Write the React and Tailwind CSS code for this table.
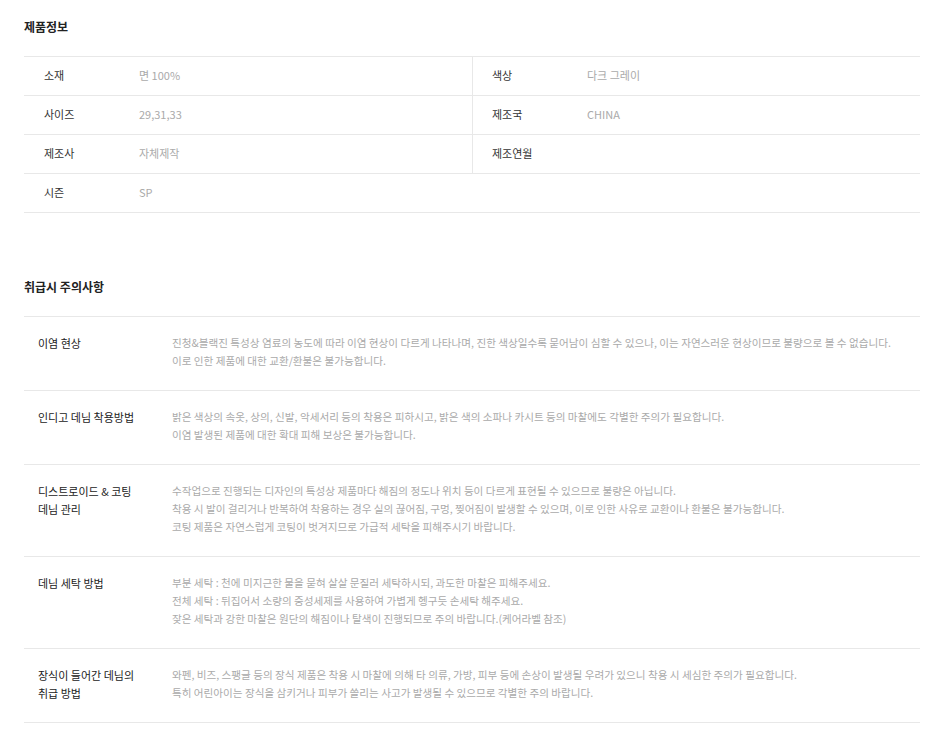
const specs = [
  { label: "소재", value: "면 100%" },
  { label: "색상", value: "다크 그레이" },
  { label: "사이즈", value: "29,31,33" },
  { label: "제조국", value: "CHINA" },
  { label: "제조사", value: "자체제작" },
  { label: "제조연월", value: "" },
];

const cautions = [
  {
    title: ["이염 현상"],
    lines: [
      "진청&블랙진 특성상 염료의 농도에 따라 이염 현상이 다르게 나타나며, 진한 색상일수록 묻어남이 심할 수 있으나, 이는 자연스러운 현상이므로 불량으로 볼 수 없습니다.",
      "이로 인한 제품에 대한 교환/환불은 불가능합니다.",
    ],
  },
  {
    title: ["인디고 데님 착용방법"],
    lines: [
      "밝은 색상의 속옷, 상의, 신발, 악세서리 등의 착용은 피하시고, 밝은 색의 소파나 카시트 등의 마찰에도 각별한 주의가 필요합니다.",
      "이염 발생된 제품에 대한 확대 피해 보상은 불가능합니다.",
    ],
  },
  {
    title: ["디스트로이드 & 코팅", "데님 관리"],
    lines: [
      "수작업으로 진행되는 디자인의 특성상 제품마다 해짐의 정도나 위치 등이 다르게 표현될 수 있으므로 불량은 아닙니다.",
      "착용 시 발이 걸리거나 반복하여 착용하는 경우 실의 끊어짐, 구멍, 찢어짐이 발생할 수 있으며, 이로 인한 사유로 교환이나 환불은 불가능합니다.",
      "코팅 제품은 자연스럽게 코팅이 벗겨지므로 가급적 세탁을 피해주시기 바랍니다.",
    ],
  },
  {
    title: ["데님 세탁 방법"],
    lines: [
      "부분 세탁 : 천에 미지근한 물을 묻혀 살살 문질러 세탁하시되, 과도한 마찰은 피해주세요.",
      "전체 세탁 : 뒤집어서 소량의 중성세제를 사용하여 가볍게 헹구듯 손세탁 해주세요.",
      "잦은 세탁과 강한 마찰은 원단의 해짐이나 탈색이 진행되므로 주의 바랍니다.(케어라벨 참조)",
    ],
  },
  {
    title: ["장식이 들어간 데님의", "취급 방법"],
    lines: [
      "와펜, 비즈, 스팽글 등의 장식 제품은 착용 시 마찰에 의해 타 의류, 가방, 피부 등에 손상이 발생될 우려가 있으니 착용 시 세심한 주의가 필요합니다.",
      "특히 어린아이는 장식을 삼키거나 피부가 쓸리는 사고가 발생될 수 있으므로 각별한 주의 바랍니다.",
    ],
  },
];

function SpecCell({ label, value, right }) {
  return (
    <div className={`flex h-[39px] items-center border-b border-[#e8e8e8] pb-[2px] ${right ? "border-l pl-[19px]" : "pl-5"}`}>
      <span className="w-[95px] shrink-0 text-[11px] text-[#333]">{label}</span>
      <span className="text-[11px] text-[#aaa]">{value}</span>
    </div>
  );
}

export default function App() {
  return (
    <div className="min-h-[744px] bg-white pl-6 pr-[15px] pt-[18px] font-['Noto_Sans_CJK_KR','Malgun_Gothic',sans-serif]">
      <h2 className="text-[12px] font-bold leading-[18px] text-[#222]">제품정보</h2>

      <div className="mt-[20px] grid grid-cols-2 border-t border-[#e8e8e8]">
        {specs.map((spec, index) => (
          <SpecCell key={spec.label} label={spec.label} value={spec.value} right={index % 2 === 1} />
        ))}
        <div className="col-span-2">
          <SpecCell label="시즌" value="SP" />
        </div>
      </div>

      <h2 className="mt-[65px] text-[12px] font-bold leading-[18px] text-[#222]">취급시 주의사항</h2>

      <div className="mt-[20px] border-t border-[#e8e8e8]">
        {cautions.map((item) => (
          <div key={item.title[0]} className="flex border-b border-[#e8e8e8] pb-[20px] pt-[17px]">
            <div className="w-[148px] shrink-0 pl-[14px] text-[11px] leading-[18px] text-[#222]">
              {item.title.map((line) => (
                <p key={line}>{line}</p>
              ))}
            </div>
            <div className="text-[10.6px] leading-[18px] text-[#aaa]">
              {item.lines.map((line) => (
                <p key={line}>{line}</p>
              ))}
            </div>
          </div>
        ))}
      </div>
    </div>
  );
}
